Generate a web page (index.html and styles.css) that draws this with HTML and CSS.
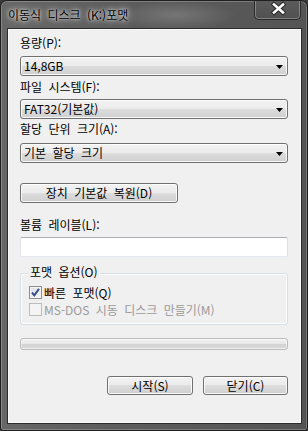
FILE: index.html
```html
<!DOCTYPE html>
<html lang="ko">
<head>
<meta charset="utf-8">
<link rel="stylesheet" href="styles.css">
</head>
<body>
<div class="window">
  <div class="titlebar">
    <span class="title">이동식 디스크 (K:)포맷</span>
    <div class="close">
      <svg width="45" height="19" viewBox="0 0 45 19">
        <path d="M19 4.5 L28 12.5 M28 4.5 L19 12.5" stroke="#2a2a2a" stroke-width="4.6" stroke-linecap="square"/>
        <path d="M19 4.5 L28 12.5 M28 4.5 L19 12.5" stroke="#ffffff" stroke-width="2.6" stroke-linecap="square"/>
      </svg>
    </div>
  </div>
  <div class="client">
    <div class="label">용량(P):</div>
    <div class="combo"><span>14,8GB</span><svg class="arrow" width="7" height="4" viewBox="0 0 7 4"><polygon points="0,0 7,0 3.5,4" fill="#000"/></svg></div>
    <div class="label l2">파일 시스템(F):</div>
    <div class="combo c2"><span>FAT32(기본값)</span><svg class="arrow" width="7" height="4" viewBox="0 0 7 4"><polygon points="0,0 7,0 3.5,4" fill="#000"/></svg></div>
    <div class="label l3">할당 단위 크기(A):</div>
    <div class="combo c3"><span>기본 할당 크기</span><svg class="arrow" width="7" height="4" viewBox="0 0 7 4"><polygon points="0,0 7,0 3.5,4" fill="#000"/></svg></div>
    <div class="btn restore">장치 기본값 복원(D)</div>
    <div class="label l4">볼륨 레이블(L):</div>
    <div class="textbox"></div>
    <div class="group">
      <div class="group-title">포맷 옵션(O)</div>
      <div class="check-row">
        <span class="cb checked"><svg width="11" height="11" viewBox="0 0 11 11"><path d="M2 5.5 L4.3 8.3 L9 1.8" fill="none" stroke="#3b4f8c" stroke-width="2"/></svg></span>
        <span class="cb-text">빠른 포맷(Q)</span>
      </div>
      <div class="check-row disabled">
        <span class="cb"></span>
        <span class="cb-text">MS-DOS 시동 디스크 만들기(M)</span>
      </div>
    </div>
    <div class="progress"></div>
    <div class="actions">
      <div class="btn start">시작(S)</div>
      <div class="btn closebtn">닫기(C)</div>
    </div>
  </div>
</div>
</body>
</html>
```
FILE: styles.css
```css
* { box-sizing: border-box; }
html, body { margin: 0; padding: 0; }
body {
  width: 308px;
  height: 431px;
  background: #3a3a3a;
  font-family: "Noto Sans CJK KR", "Noto Sans", sans-serif;
  font-size: 12px;
  word-spacing: 3px;
  color: #000;
}
.window {
  width: 308px;
  height: 431px;
  border: 1px solid #1f1f1f;
  border-radius: 7px 7px 3px 3px;
  background:
    radial-gradient(ellipse 60px 14px at 175px 14px, rgba(150,150,150,0.45), rgba(150,150,150,0) 100%),
    linear-gradient(90deg, #676767 0%, #5d5d5d 35%, #5a5a5a 60%, #545454 100%);
  box-shadow: inset 0 0 0 1px rgba(255,255,255,0.22);
  display: flex;
  flex-direction: column;
  padding: 0 6px 7px 7px;
  overflow: hidden;
}
.titlebar {
  height: 28px;
  display: flex;
  justify-content: space-between;
  align-items: flex-start;
  flex: none;
}
.title {
  margin-top: 7px;
  line-height: 14px;
  font-size: 12px;
  color: #000;
  text-shadow: 0 0 5px rgba(255,255,255,0.9), 0 0 9px rgba(255,255,255,0.7), 0 0 2px rgba(255,255,255,0.6);
}
.close {
  width: 47px;
  height: 20px;
  margin-top: -1px;
  border: 1px solid #2a2a2a;
  border-top: none;
  border-radius: 0 0 5px 5px;
  box-shadow: inset 0 0 0 1px rgba(255,255,255,0.28);
  background: linear-gradient(#5c5c5c, #505050);
  display: flex;
}
.client {
  flex: 1;
  background: #f0f0f0;
  border: 1px solid #fafafa;
  box-shadow: 0 0 0 1px #2b2b2b;
  padding: 6px 12px 0 11px;
  display: flex;
  flex-direction: column;
}
.label {
  line-height: 14px;
  height: 14px;
  white-space: nowrap;
}
.l2 { margin-top: 4px; }
.l3 { margin-top: 3px; }
.l4 { margin-top: 15px; }
.combo, .btn {
  border: 1px solid #707070;
  border-radius: 3px;
  background: linear-gradient(#f2f2f2 0%, #ebebeb 50%, #dddddd 50%, #cfcfcf 100%);
  box-shadow: inset 0 0 0 1px rgba(255,255,255,0.85);
}
.combo {
  margin-top: 6px;
  height: 20px;
  display: flex;
  align-items: center;
  justify-content: space-between;
  padding: 0 4px 0 3px;
  line-height: 14px;
}
.c2 { margin-top: 5px; }
.c3 { margin-top: 7px; }
.arrow { margin-top: 1px; flex: none; }
.btn {
  height: 20px;
  display: flex;
  align-items: center;
  justify-content: center;
  line-height: 14px;
  white-space: nowrap;
}
.restore {
  margin-top: 20px;
  width: 158px;
}
.textbox {
  margin-top: 5px;
  height: 20px;
  background: #fff;
  border: 1px solid;
  border-color: #abadb3 #dbdfe6 #e3e9ef #e2e3ea;
  border-radius: 2px;
}
.group {
  position: relative;
  margin-top: 16px;
  height: 52px;
  border: 1px solid #d5dfe5;
  border-radius: 3px;
  box-shadow: inset 0 0 0 1px #ffffff;
  padding: 12px 0 4px 8px;
}
.group-title {
  position: absolute;
  top: -9px;
  left: 7px;
  padding: 0 2px;
  background: #f0f0f0;
  line-height: 14px;
}
.check-row {
  height: 17px;
  display: flex;
  align-items: flex-start;
}
.cb {
  width: 13px;
  height: 13px;
  flex: none;
  border: 1px solid #8e8f8f;
  background: linear-gradient(135deg, #dcdfe3, #f7f7f7);
  box-shadow: inset 0 0 0 1px #f4f4f4;
  display: flex;
  align-items: center;
  justify-content: center;
}
.cb-text {
  margin-left: 2px;
  line-height: 13px;
  white-space: nowrap;
  color: #000;
}
.disabled .cb {
  border-color: #bcbcbc;
  background: #f4f4f4;
  box-shadow: none;
}
.disabled .cb-text { color: #9a9a9a; }
.progress {
  margin-top: 13px;
  height: 12px;
  border: 1px solid #bcbcbc;
  border-radius: 3px;
  background: linear-gradient(#f3f3f3 0%, #e8e8e8 45%, #d3d3d3 55%, #dadada 100%);
  box-shadow: inset 0 0 0 1px rgba(255,255,255,0.55);
}
.actions {
  margin-top: 26px;
  display: flex;
  justify-content: flex-end;
  gap: 10px;
}
.actions .btn { height: 19px; }
.start { width: 86px; }
.closebtn { width: 85px; }
```
